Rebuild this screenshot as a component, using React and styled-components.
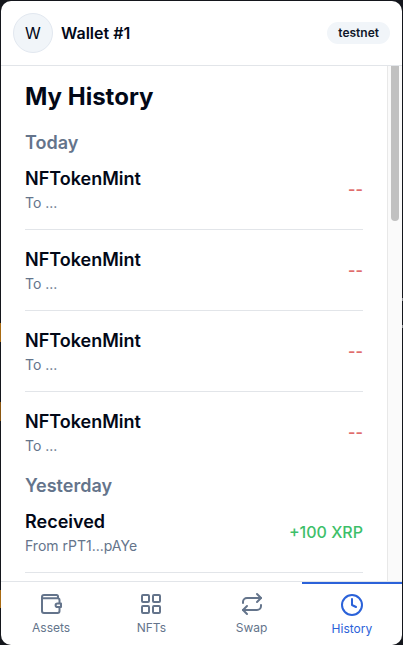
import React from 'react'
import styled, { createGlobalStyle } from 'styled-components'

const GlobalStyle = createGlobalStyle`
  * {
    box-sizing: border-box;
  }

  body {
    background-color: #14161c;
    font-family: Inter, "Liberation Sans", sans-serif;
    margin: 0;
    overflow: hidden;
  }
`

const Backdrop = styled.div`
  background:
    linear-gradient(
      #14161c 323px, #a86a12 323px, #a86a12 342px,
      #14161c 342px, #14161c 402px, #8a5610 402px, #8a5610 421px,
      #14161c 421px, #14161c 590px, #a86a12 590px, #a86a12 608px, #14161c 608px
    ) left top / 2px 100% no-repeat,
    linear-gradient(
      transparent 298px, #8b8d92 298px, #8b8d92 301px, transparent 301px,
      transparent 325px, #8b8d92 325px, #8b8d92 328px, transparent 328px
    ) right top / 1px 100% no-repeat;
  height: 645px;
  padding: 1px 1px 0;
  width: 403px;
`

const Wallet = styled.div`
  background-color: #fff;
  border-radius: 10px;
  color: #020817;
  display: flex;
  flex-direction: column;
  height: 644px;
  overflow: hidden;
`

const Header = styled.header`
  align-items: center;
  border-bottom: 1px solid #e2e5e9;
  display: flex;
  flex: none;
  height: 65px;
  padding: 0 12px;
`

const Avatar = styled.div`
  align-items: center;
  background-color: #f1f5f9;
  border: 1px solid #e2e8f0;
  border-radius: 50%;
  display: flex;
  font-size: 16px;
  height: 40px;
  justify-content: center;
  margin-right: 8px;
  width: 40px;
`

const WalletName = styled.div`
  font-size: 16px;
  font-weight: 600;
  line-height: 24px;
`

const Badge = styled.div`
  background-color: #f1f5f9;
  border-radius: 11px;
  color: #0f172a;
  font-size: 12px;
  font-weight: 600;
  line-height: 22px;
  margin-left: auto;
  padding: 0 11px;
`

const Body = styled.main`
  display: flex;
  flex: 1;
  min-height: 0;
`

const Content = styled.div`
  flex: 1;
  overflow: hidden;
  padding: 15px 24px 0;
`

const ScrollTrack = styled.div`
  background-color: #fafafa;
  border-left: 1px solid #e8e8e8;
  display: flex;
  justify-content: center;
  width: 15px;
`

const ScrollThumb = styled.div`
  background-color: #c1c1c1;
  border-radius: 0 0 4px 4px;
  height: 155px;
  width: 8px;
`

const Title = styled.h1`
  font-size: 24px;
  font-weight: 700;
  line-height: 32px;
  margin: 0 0 16px;
`

const Day = styled.h2`
  color: #64748b;
  font-size: 18px;
  font-weight: 600;
  line-height: 28px;
  margin: 0 0 8px;
`

const Group = styled.section`
  margin-bottom: 16px;
`

const Row = styled.div`
  align-items: center;
  border-bottom: ${({ $divider }) => ($divider ? '1px solid #e2e5e9' : 'none')};
  display: flex;
  justify-content: space-between;
  margin-bottom: ${({ $divider }) => ($divider ? '16px' : 0)};
  padding-bottom: ${({ $divider }) => ($divider ? '16px' : 0)};
`

const RowTitle = styled.div`
  font-size: 18px;
  font-weight: 600;
  line-height: 28px;
`

const RowText = styled.div`
  color: #64748b;
  font-size: 14px;
  line-height: 20px;
`

const Amount = styled.div`
  color: ${({ $positive }) => ($positive ? '#3dbf69' : '#e06c6c')};
  font-size: 16px;
  font-weight: ${({ $positive }) => ($positive ? 500 : 600)};
  line-height: 24px;
`

const Nav = styled.nav`
  border-top: 1px solid #e2e5e9;
  display: grid;
  flex: none;
  grid-template-columns: repeat(4, 1fr);
  height: 64px;
`

const NavItem = styled.div`
  align-items: center;
  border-top: ${({ $active }) => ($active ? '2px solid #2b62d9' : 'none')};
  color: ${({ $active }) => ($active ? '#2b62d9' : '#64748b')};
  display: flex;
  flex-direction: column;
  font-size: 12px;
  gap: 4px;
  line-height: 16px;
  padding-top: ${({ $active }) => ($active ? '9px' : '10px')};
`

const Icon = styled.svg`
  display: block;
  fill: none;
  height: 24px;
  stroke: currentColor;
  stroke-linecap: round;
  stroke-linejoin: round;
  stroke-width: 2;
  width: 24px;
`

const WalletIcon = () => (
  <Icon viewBox="0 0 24 24">
    <path d="M3 5v14a2 2 0 0 0 2 2h13.500a2 2 0 0 0 2-2v-3.500M20.500 11V8a1.700 1.700 0 0 0-1.700-1.700H3.500M19 6V4.500A1.500 1.500 0 0 0 17.500 3H5a2 2 0 0 0-2 2" />
    <path d="M22 11.500v3.600h-3.600a1.800 1.800 0 0 1 0-3.600z" />
  </Icon>
)

const GridIcon = () => (
  <Icon viewBox="0 0 24 24">
    <rect x="3" y="3" width="7" height="7" rx="1" />
    <rect x="14" y="3" width="7" height="7" rx="1" />
    <rect x="14" y="14" width="7" height="7" rx="1" />
    <rect x="3" y="14" width="7" height="7" rx="1" />
  </Icon>
)

const SwapIcon = () => (
  <Icon viewBox="0 0 24 24">
    <path d="m17 2 4 4-4 4" />
    <path d="M3 11v-1a4 4 0 0 1 4-4h14" />
    <path d="m7 22-4-4 4-4" />
    <path d="M21 13v1a4 4 0 0 1-4 4H3" />
  </Icon>
)

const ClockIcon = () => (
  <Icon viewBox="0 0 24 24">
    <circle cx="12" cy="12" r="10" />
    <path d="M12 6v6l4 2" />
  </Icon>
)

const mint = { title: 'NFTokenMint', text: 'To ...', amount: '--' }

const history = [
  { day: 'Today', items: [mint, mint, mint, mint] },
  {
    day: 'Yesterday',
    items: [
      { title: 'Received', text: 'From rPT1...pAYe', amount: '+100 XRP', positive: true, divider: true }
    ]
  }
]

const tabs = [
  { label: 'Assets', Glyph: WalletIcon },
  { label: 'NFTs', Glyph: GridIcon },
  { label: 'Swap', Glyph: SwapIcon },
  { label: 'History', Glyph: ClockIcon, active: true }
]

const Transaction = ({ item, divider }) => (
  <Row $divider={divider}>
    <div>
      <RowTitle>{item.title}</RowTitle>
      <RowText>{item.text}</RowText>
    </div>
    <Amount $positive={item.positive}>{item.amount}</Amount>
  </Row>
)

const App = () => (
  <Backdrop>
    <GlobalStyle />
    <Wallet>
      <Header>
        <Avatar>W</Avatar>
        <WalletName>Wallet #1</WalletName>
        <Badge>testnet</Badge>
      </Header>
      <Body>
        <Content>
          <Title>My History</Title>
          {history.map(({ day, items }) => (
            <Group key={day}>
              <Day>{day}</Day>
              {items.map((item, i) => (
                <Transaction key={i} item={item} divider={item.divider || i < items.length - 1} />
              ))}
            </Group>
          ))}
        </Content>
        <ScrollTrack>
          <ScrollThumb />
        </ScrollTrack>
      </Body>
      <Nav>
        {tabs.map(({ label, Glyph, active }) => (
          <NavItem key={label} $active={active}>
            <Glyph />
            {label}
          </NavItem>
        ))}
      </Nav>
    </Wallet>
  </Backdrop>
)

export default App
